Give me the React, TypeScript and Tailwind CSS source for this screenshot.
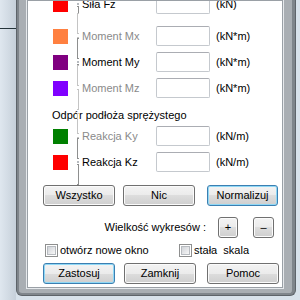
import React from 'react';

interface RowDef {
  swatch: string;
  label: string;
  unit: string;
  enabled: boolean;
}

const forces: RowDef[] = [
  { swatch: 'bg-[#ff0000]', label: 'Siła Fz', unit: '(kN)', enabled: true },
  { swatch: 'bg-[#ff8040]', label: 'Moment Mx', unit: '(kN*m)', enabled: false },
  { swatch: 'bg-[#800080]', label: 'Moment My', unit: '(kN*m)', enabled: true },
  { swatch: 'bg-[#8000ff]', label: 'Moment Mz', unit: '(kN*m)', enabled: false },
];

const reactions: RowDef[] = [
  { swatch: 'bg-[#008000]', label: 'Reakcja Ky', unit: '(kN/m)', enabled: false },
  { swatch: 'bg-[#ff0000]', label: 'Reakcja Kz', unit: '(kN/m)', enabled: true },
];

const CheckBox: React.FC<{ disabled?: boolean }> = ({ disabled }) =>
  disabled ? (
    <span className="w-[13px] h-[13px] shrink-0 border border-[#c4c4c4] bg-white p-[1px]">
      <span className="block w-full h-full bg-[#f4f4f4]" />
    </span>
  ) : (
    <span className="w-[13px] h-[13px] shrink-0 border border-[#8e8f8f] bg-white p-[1px]">
      <span className="block w-full h-full border border-[#b7bbc0] bg-[linear-gradient(135deg,#d0d3d8,#f7f7f7)]" />
    </span>
  );

const Button: React.FC<{ label: string; focused?: boolean; className?: string }> = ({
  label,
  focused,
  className,
}) => (
  <div
    className={
      'h-[21px] flex items-center justify-center rounded-[3px] border text-[11px] text-black bg-[linear-gradient(#f3f3f3_0%,#ebebeb_50%,#dddddd_50%,#cfcfcf_100%)] ' +
      (focused
        ? 'border-[#3c7fb1] shadow-[inset_0_0_0_1px_#8fd8f6] '
        : 'border-[#707070] shadow-[inset_0_0_0_1px_#fbfbfb] ') +
      (className || '')
    }
  >
    {label}
  </div>
);

const ValueRow: React.FC<{ row: RowDef; className?: string }> = ({ row, className }) => (
  <div className={'h-[20px] flex items-center pl-[25px] ' + (className || '')}>
    <span className={'w-[15px] h-[15px] shrink-0 ' + row.swatch} />
    <span className="ml-[9px]">
      <CheckBox disabled={!row.enabled} />
    </span>
    <span
      className={
        'ml-[3px] w-[74px] text-[11px] leading-none ' +
        (row.enabled ? 'text-black' : 'text-[#8a8a8a]')
      }
    >
      {row.label}
    </span>
    <span className="w-[54px] h-[20px] shrink-0 rounded-[2px] border border-[#c5c9ce] border-t-[#abadb3] bg-white" />
    <span className="ml-[6px] text-[11px] leading-none text-black">{row.unit}</span>
  </div>
);

export default function App() {
  return (
    <div className="w-[300px] h-[300px] overflow-hidden flex bg-[#d8e2eb] font-['Liberation_Sans',sans-serif]">
      {/* okno w tle */}
      <div className="w-[16px] shrink-0 bg-[linear-gradient(to_right,#dfe7ef,#c6d0da)]">
        <div className="mt-[28px] h-px bg-[#25343a]" />
      </div>

      {/* ramka dialogu */}
      <div className="w-[280px] h-[296px] shrink-0 flex flex-col pl-[10px] pr-[12px] pb-[7px] border-x border-b border-[#5e646a] rounded-b-[6px] bg-[#a9aeb3] shadow-[inset_2px_0_0_#7f858b,inset_-3px_0_0_#7f858b,inset_0_-2px_0_#80868c]">
        <div className="flex-1 flex flex-col overflow-hidden border border-[#9aa0a6] bg-white shadow-[0_0_0_1px_#e6e9ec]">
          <div className="-mt-[7px] flex flex-col">
            <ValueRow row={forces[0]} />
            <ValueRow row={forces[1]} className="mt-[12px]" />
            <ValueRow row={forces[2]} className="mt-[6px]" />
            <ValueRow row={forces[3]} className="mt-[6px]" />

            <div className="mt-[11px] h-[13px] pl-[24px] text-[11px] leading-[13px] text-black">
              Odpór podłoża sprężystego
            </div>

            <ValueRow row={reactions[0]} className="mt-[4px]" />
            <ValueRow row={reactions[1]} className="mt-[6px]" />

            <div className="mt-[13px] flex pl-[15px]">
              <Button label="Wszystko" className="w-[72px]" />
              <Button label="Nic" className="w-[72px] ml-[8px]" />
              <Button label="Normalizuj" focused className="w-[71px] ml-[12px]" />
            </div>

            <div className="mt-[11px] h-[20px] flex items-center justify-end pr-[8px]">
              <span className="text-[11px] leading-none text-black">Wielkość wykresów :</span>
              <Button label="+" className="w-[20px] h-[20px] ml-[12px]" />
              <Button label="–" className="w-[21px] h-[20px] ml-[15px]" />
            </div>

            <div className="mt-[7px] h-[13px] flex items-center pl-[17px]">
              <div className="w-[134px] flex items-center">
                <CheckBox />
                <span className="ml-[2px] text-[11px] leading-none text-black">otwórz nowe okno</span>
              </div>
              <CheckBox />
              <span className="ml-[2px] text-[11px] leading-none text-black whitespace-pre">stała  skala</span>
            </div>

            <div className="mt-[6px] flex pl-[15px]">
              <Button label="Zastosuj" focused className="w-[72px]" />
              <Button label="Zamknij" className="w-[72px] ml-[9px]" />
              <Button label="Pomoc" className="w-[72px] ml-[11px]" />
            </div>
          </div>
        </div>
      </div>
    </div>
  );
}
